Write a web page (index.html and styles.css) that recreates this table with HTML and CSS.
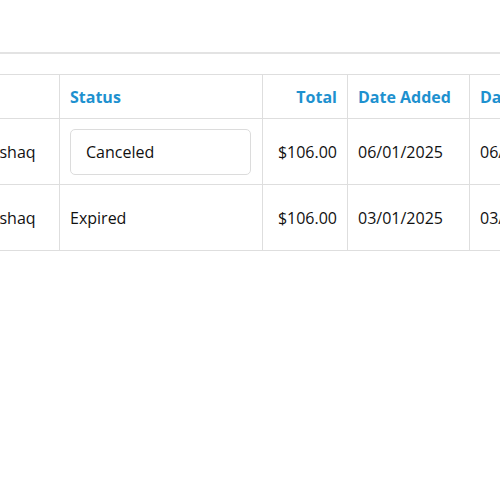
FILE: index.html
```html
<!DOCTYPE html>
<html>
<head>
<meta charset="utf-8">
<link rel="stylesheet" href="styles.css">
</head>
<body>
<div class="page">
  <div class="divider"></div>
  <div class="table-wrap">
    <table class="orders">
      <colgroup>
        <col class="c-customer">
        <col class="c-status">
        <col class="c-total">
        <col class="c-date">
        <col class="c-date2">
      </colgroup>
      <thead>
        <tr>
          <th class="left"></th>
          <th class="left">Status</th>
          <th class="right">Total</th>
          <th class="left">Date Added</th>
          <th class="left">Date Modified</th>
        </tr>
      </thead>
      <tbody>
        <tr>
          <td>Ishaq</td>
          <td><select class="status-select"><option>Canceled</option></select></td>
          <td class="right">$106.00</td>
          <td>06/01/2025</td>
          <td>06/01/2025</td>
        </tr>
        <tr>
          <td>Ishaq</td>
          <td>Expired</td>
          <td class="right">$106.00</td>
          <td>03/01/2025</td>
          <td>03/01/2025</td>
        </tr>
      </tbody>
    </table>
  </div>
</div>
</body>
</html>
```

FILE: styles.css
```css
html, body {
  margin: 0;
  padding: 0;
  background: #fff;
}

body {
  font-family: "Open Sans", "Liberation Sans", sans-serif;
  font-size: 16px;
  color: #111;
  width: 500px;
  height: 500px;
  overflow: hidden;
}

.page {
  padding-top: 52px;
}

.divider {
  height: 0;
  border-top: 2px solid #e3e3e3;
}

.table-wrap {
  margin-top: 20px;
  overflow: hidden;
}

.orders {
  border-collapse: collapse;
  table-layout: fixed;
  width: 645px;
  margin-left: -16px;
}

.c-customer { width: 75px; }
.c-status { width: 203px; }
.c-total { width: 85px; }
.c-date { width: 122px; }
.c-date2 { width: 160px; }

.orders th,
.orders td {
  border: 1px solid #dedede;
  padding: 0 10px;
  vertical-align: middle;
  white-space: nowrap;
  overflow: hidden;
  text-align: left;
  line-height: 22px;
}

.orders th {
  height: 43px;
  font-weight: 700;
  color: #1e91cf;
}

.orders td {
  height: 65px;
}

.orders .right {
  text-align: right;
}

.status-select {
  appearance: none;
  -webkit-appearance: none;
  display: block;
  width: 181px;
  height: 46px;
  margin: 0;
  padding: 0 15px;
  border: 1px solid #dcdcdc;
  border-radius: 5px;
  background: #fff;
  font-family: inherit;
  font-size: 16px;
  color: #111;
}
```
